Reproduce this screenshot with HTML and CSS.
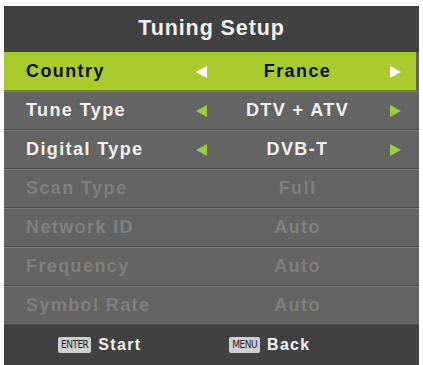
FILE: index.html
```html
<!DOCTYPE html>
<html lang="en">
<head>
    <meta charset="UTF-8">
    <meta name="viewport" content="width=device-width, initial-scale=1.0">
    <title>Tuning Setup</title>
    <link rel="stylesheet" href="styles.css">
</head>
<body>

    <div class="menu">
        <div class="menu-title">Tuning Setup</div>

        <div class="menu-row selected">
            <span class="label">Country</span>
            <span class="arrow left"></span>
            <span class="value">France</span>
            <span class="arrow right"></span>
        </div>
        <div class="menu-row">
            <span class="label">Tune Type</span>
            <span class="arrow left"></span>
            <span class="value">DTV + ATV</span>
            <span class="arrow right"></span>
        </div>
        <div class="menu-row">
            <span class="label">Digital Type</span>
            <span class="arrow left"></span>
            <span class="value">DVB-T</span>
            <span class="arrow right"></span>
        </div>
        <div class="menu-row disabled">
            <span class="label">Scan Type</span>
            <span></span>
            <span class="value">Full</span>
            <span></span>
        </div>
        <div class="menu-row disabled">
            <span class="label">Network ID</span>
            <span></span>
            <span class="value">Auto</span>
            <span></span>
        </div>
        <div class="menu-row disabled">
            <span class="label">Frequency</span>
            <span></span>
            <span class="value">Auto</span>
            <span></span>
        </div>
        <div class="menu-row disabled">
            <span class="label">Symbol Rate</span>
            <span></span>
            <span class="value">Auto</span>
            <span></span>
        </div>

        <div class="menu-footer">
            <div class="hint"><span class="key">ENTER</span> Start</div>
            <div class="hint"><span class="key">MENU</span> Back</div>
        </div>
    </div>

</body>
</html>
```

FILE: styles.css
```css
body {
    font-family: "Liberation Sans", Arial, sans-serif;
    font-weight: bold;
    margin: 0;
    background-color: #fff;
}
.menu {
    margin: 6px 4px 0 4px;
    background-color: #646464;
}
.menu-title {
    height: 46px;
    line-height: 45px;
    background-color: #414141;
    color: #f2f2f2;
    font-size: 21.5px;
    letter-spacing: 0.9px;
    text-align: center;
}
.menu-row {
    display: grid;
    grid-template-columns: 164px 22px 1fr 24px;
    align-items: center;
    height: 37px;
    padding: 0 12px 0 22px;
    border-top: 1px solid #7c7c7c;
    border-bottom: 1px solid #4c4c4c;
    color: #f2f2f2;
    font-size: 18px;
    letter-spacing: 1.4px;
}
.menu-row .value {
    text-align: center;
}
.menu-row.selected {
    background-color: #a9cc2c;
    color: #111;
    border-top-color: #a9cc2c;
    border-bottom-color: #6f8620;
    margin-right: 3px;
    padding-right: 9px;
}
.menu-row.disabled {
    color: #7f7f7f;
}
.arrow {
    justify-self: center;
    width: 0;
    height: 0;
    border-top: 6px solid transparent;
    border-bottom: 6px solid transparent;
}
.arrow.left {
    border-right: 11px solid #98cf38;
}
.arrow.right {
    border-left: 11px solid #98cf38;
}
.selected .arrow.left {
    border-right-color: #fff;
}
.selected .arrow.right {
    border-left-color: #fff;
}
.menu-footer {
    display: flex;
    align-items: center;
    gap: 88px;
    height: 40px;
    padding-left: 54px;
    background-color: #414141;
    color: #f2f2f2;
    font-size: 16px;
    letter-spacing: 1.3px;
}
.hint {
    display: flex;
    align-items: center;
    gap: 7px;
}
.key {
    display: inline-block;
    padding: 2px 3px;
    border-radius: 2px;
    background-color: #cfcfcf;
    color: #222;
    font-family: "DejaVu Sans Condensed", "Liberation Sans Narrow", sans-serif;
    font-size: 10px;
    font-weight: normal;
    letter-spacing: -0.5px;
    line-height: 12px;
}
```
